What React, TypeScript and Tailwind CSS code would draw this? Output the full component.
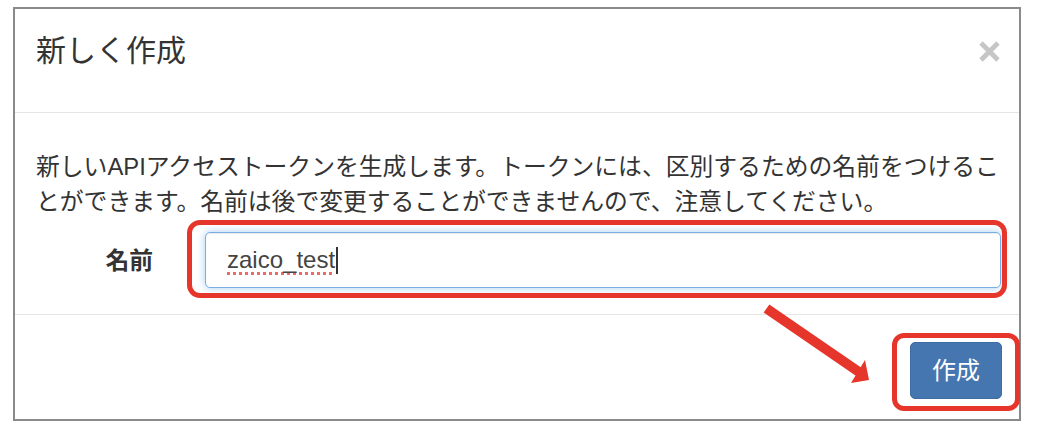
import React from "react";

export default function App() {
  return (
    <div className="relative w-[1040px] h-[432px] bg-white overflow-hidden font-['Liberation_Sans','Noto_Sans_CJK_JP',sans-serif] text-[#333]">
      <div className="ml-[13px] mt-[7px] w-[1008px] h-[414px] border-2 border-[#8a8a8a] flex flex-col bg-white">
        {/* header */}
        <div className="h-[104px] shrink-0 border-b border-[#e5e5e5] pl-[21px] pr-[19px] pt-[21px]">
          <div className="h-[42px] flex items-center justify-between">
            <h4 className="text-[30px] leading-[42px] font-normal">新しく作成</h4>
            <svg width="21" height="21" viewBox="0 0 21 21" className="block">
              <path d="M2 2 L19 19 M19 2 L2 19" stroke="#c6c6c6" strokeWidth="4.8" strokeLinecap="butt" />
            </svg>
          </div>
        </div>
        {/* body */}
        <div className="h-[202px] shrink-0 border-b border-[#e5e5e5] pl-[21px] pr-[6px] pt-[36px]">
          <p className="text-[23.8px] leading-[35px] whitespace-nowrap">
            新しいAPIアクセストークンを生成します。トークンには、区別するための名前をつけるこ
            <br />
            とができます。名前は後で変更することができませんので、注意してください。
          </p>
          <div className="mt-[13px] flex items-center">
            <label className="w-[117px] text-right text-[23.8px] leading-[35px] font-bold">名前</label>
            <div className="ml-[52px] w-[796px] h-[56px] rounded-[5px] border-[1.5px] border-[#7aaee2] shadow-[inset_0_1px_1px_rgba(0,0,0,0.075),0_0_8px_rgba(102,175,233,0.6)] flex items-center pl-[21px] bg-white">
              <span className="text-[24px] leading-[30px] text-[#444] underline decoration-dotted decoration-[#ec6a6a] decoration-[3px] underline-offset-[4px]">
                zaico_test
              </span>
              <span className="inline-block w-[1.5px] h-[27px] bg-[#333] ml-[1px]" />
            </div>
          </div>
        </div>
        {/* footer */}
        <div className="flex-1 flex justify-end items-start pt-[27px] pr-[17px]">
          <button className="w-[92px] h-[57px] rounded-[5px] bg-[#4676b0] border border-[#3f6ca3] text-white text-[24px] leading-[30px]">
            作成
          </button>
        </div>
      </div>

      {/* annotations */}
      <div className="absolute left-[187px] top-[220px] w-[820px] h-[78px] border-[5px] border-[#e6352b] rounded-[13px]" />
      <div className="absolute left-[892px] top-[333px] w-[128px] h-[78px] border-[5px] border-[#e6352b] rounded-[12px]" />
      <svg className="absolute left-0 top-0 pointer-events-none" width="1040" height="432" viewBox="0 0 1040 432">
        <line x1="766.5" y1="308.5" x2="859" y2="372" stroke="#e6352b" strokeWidth="10" strokeLinecap="butt" />
        <polygon points="869,380 865,360 851,383" fill="#e6352b" />
      </svg>
    </div>
  );
}
